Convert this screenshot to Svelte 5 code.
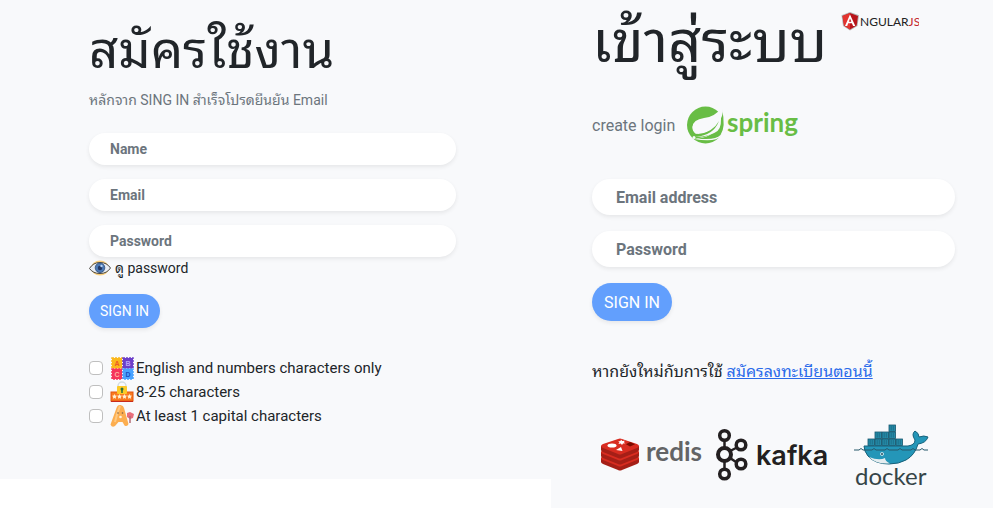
<script>
  let showPassword = $state(false);
  const rules = [
    { id: 'latin', label: 'English and numbers characters only' },
    { id: 'length', label: '8-25 characters' },
    { id: 'capital', label: 'At least 1 capital characters' }
  ];
  const blocks = [
    { x: 1, y: 1, fill: '#fbb81c', ink: '#ee5a24', letter: 'A' },
    { x: 12, y: 1, fill: '#6c3fc9', ink: '#b7a2f5', letter: 'B' },
    { x: 1, y: 12, fill: '#f5365c', ink: '#ffb3a0', letter: 'C' },
    { x: 12, y: 12, fill: '#4aa3ff', ink: '#1b4fc0', letter: 'D' }
  ];
  const boxes = [
    [16, 21], [23, 21], [30, 21], [37, 21], [44, 21],
    [23, 14], [30, 14], [37, 14], [37, 7]
  ];
</script>

<main>
  <section class="register">
    <h1>สมัครใช้งาน</h1>
    <p class="note">หลักจาก SING IN สำเร็จโปรดยืนยัน Email</p>
    <form>
      <input class="field" type="text" placeholder="Name" aria-label="Name" />
      <input class="field" type="email" placeholder="Email" aria-label="Email" />
      <input class="field" type={showPassword ? 'text' : 'password'} placeholder="Password" aria-label="Password" />
      <button class="peek" type="button" onclick={() => (showPassword = !showPassword)}>
        <svg width="22" height="16" viewBox="0 0 22 16" aria-hidden="true">
          <ellipse cx="11" cy="8" rx="9" ry="7.5" fill="#f8cf7d" />
          <path d="M.5 8.5Q4 2.5 11 2.5T21.5 8Q18 13.500 11 13.500T.5 8.500Z" fill="#e9eef4" stroke="#4c4943" stroke-width="1" />
          <circle cx="11" cy="7.800" r="4.800" fill="#4a79b5" stroke="#2f4b75" stroke-width=".8" />
          <circle cx="11" cy="8" r="2.200" fill="#22365f" />
          <circle cx="12.500" cy="6" r="1.200" fill="#b9d4f2" />
        </svg>
        <span>ดู password</span>
      </button>
      <button class="submit" type="submit">SIGN IN</button>
    </form>
    <ul class="rules">
      {#each rules as rule (rule.id)}
        <li>
          <input type="checkbox" id={rule.id} />
          <label for={rule.id}>
            {#if rule.id === 'latin'}
              <svg width="24" height="24" viewBox="0 0 24 24" aria-hidden="true">
                {#each blocks as b}
                  <rect x={b.x + 1} y={b.y + 1} width="10" height="10" fill={b.fill} stroke={b.fill} stroke-width="1.5" stroke-dasharray="2 1" />
                  <text class="tile" x={b.x + 6} y={b.y + 9} fill={b.ink}>{b.letter}</text>
                {/each}
              </svg>
            {:else if rule.id === 'length'}
              <svg width="24" height="24" viewBox="0 0 24 24" aria-hidden="true">
                <path d="M8 7V6a4 4 0 0 1 8 0v1" fill="none" stroke="#d3dce0" stroke-width="1.500" />
                <rect x="1" y="12" width="22" height="9" fill="#f97a20" stroke="#e2560f" />
                <rect x="7" y="6" width="10" height="8" rx="1" fill="#fdca28" />
                <circle cx="12" cy="9" r="1.500" fill="#28703b" />
                <path d="M12 9v4" stroke="#28703b" stroke-width="1.500" />
                {#each [4.5, 9.5, 14.5, 19.5] as x}
                  <path d="M{x} 14l.8 1.600 1.700.2-1.200 1.200.3 1.700-1.600-.8-1.600.8.3-1.700-1.200-1.200 1.700-.2Z" fill="#fff0d2" />
                {/each}
                <path d="M1 21.500h22" stroke="#c92a1c" stroke-width="1" />
              </svg>
            {:else}
              <svg width="24" height="24" viewBox="0 0 24 24" aria-hidden="true">
                <path d="M.5 20.500 6.500 4q1-3.500 4-3T14 4l4.500 16q-1 3-4 1.500L12.500 18h-4L5 22q-3 2-4.500-1.500Z" fill="#fcae50" />
                <path d="M10 2q-3 7-5 16" stroke="#ffc981" stroke-width="2" fill="none" />
                <circle cx="8" cy="9" r=".8" fill="#7d5d42" /><circle cx="12.500" cy="9" r=".8" fill="#7d5d42" />
                <circle cx="10.500" cy="13" r="1.300" fill="#fff3df" />
                <path d="m17 9 3-1 4 2-1 4-3 1-3-2Z" fill="#e96f7b" /><path d="M20 12v7" stroke="#b56b74" stroke-width="1.500" />
              </svg>
            {/if}
            <span>{rule.label}</span>
          </label>
        </li>
      {/each}
    </ul>
  </section>

  <section class="login">
    <header>
      <h1>เข้าสู่ระบบ</h1>
      <svg class="angular" width="78" height="22" viewBox="0 0 78 22" role="img" aria-label="AngularJS">
        <path d="M9 1 18 4.300 16.500 15 9 19.500 2 15 .5 4.300Z" fill="#b3b3b3" />
        <path d="M9 2 17 5l-1.300 9.500-6.700 4-6-4L1.500 5Z" fill="#b8141a" />
        <path d="M9 2v16.500l-6-4L1.500 5Z" fill="#e3342f" />
        <path d="m9 3.500-5 11.500h2.200l1-2.700h3.700l1.200 2.700h2.200Zm0 4 1.300 3.200H7.800Z" fill="#fff" />
        <text x="19" y="15" fill="#222">NGULAR<tspan fill="#c4262e">JS</tspan></text>
      </svg>
    </header>
    <div class="create">
      <span>create login</span>
      <svg width="114" height="40" viewBox="0 0 114 40" role="img" aria-label="spring">
        <circle cx="18.500" cy="20" r="18.500" fill="#68bd45" />
        <path d="M34.500 2.500q7 19-.5 28.500-5 6.500-27 3Q29 31 33 19 26 27 11 29 6 27 5.500 22 6 14.500 17 13 28 12 34.500 2.500Z" fill="#f8f9fb" />
        <path d="M35 4q4 18-1.500 26-5 5.500-23 3.500Q31 31 33 15q3.500-5 2-11Z" fill="#68bd45" />
        <path d="M33.500 6q2 16-3 20-7 5.500-22 6Q24 29 31 17 24 25 9 29 5 26 5.500 22 7 15 17 14 28 13 33.500 6Z" fill="#f8f9fb" />
        <path d="M32 16Q27 26 9 31.500 26 31 32 16Z" fill="#68bd45" />
        <circle cx="7" cy="32.500" r="1.500" fill="#f8f9fb" />
        <text class="spring" x="40" y="27">spring</text>
      </svg>
    </div>
    <form>
      <input class="field" type="email" placeholder="Email address" aria-label="Email address" />
      <input class="field" type="password" placeholder="Password" aria-label="Password" />
      <button class="submit" type="submit">SIGN IN</button>
    </form>
    <p class="join">หากยังใหม่กับการใช้ <a href="#register">สมัครลงทะเบียนตอนนี้</a></p>
    <div class="logos">
      <svg width="106" height="70" viewBox="0 0 106 70" role="img" aria-label="redis">
        {#each [12, 6, 0] as dy}
          <path d="M1 {22 + dy}v4q0 1 2 2l15 6q2 1 4 0l15-6q2-1 2-2v-4Z" fill="#a51f17" />
          <path d="M1 {22 + dy}q0-1 2-2l15-5q2-1 4 0l15 5q2 1 2 2t-2 2l-15 6q-2 1-4 0L3 {24 + dy}q-2-1-2-2Z" fill="#d82c20" />
        {/each}
        <ellipse cx="12" cy="21.500" rx="4.500" ry="2" fill="#fff" />
        <path d="m21 15.500 1.200 1.500 2.600-.3-1 1.500 1.600 1-2.400.2-1 1.500-1.200-1.300-2.500.3 1.200-1.500-1.300-1 2.300-.3Zm-5 10.500 5-3 1.500 4Z" fill="#fff" />
        <path d="m30 18 5 2.300-5 2.300-4-2.300Z" fill="#7a0c00" />
        <text class="redis" x="46" y="37">redis</text>
      </svg>
      <svg class="kafka" width="118" height="70" viewBox="0 0 118 70" role="img" aria-label="kafka">
        <g fill="none" stroke="#231f20">
          <path d="M10.500 15v9M10.500 37v8M16 27l6-3M16 34l6 4" stroke-width="2.500" />
          <circle cx="10.500" cy="11.500" r="4.800" stroke-width="3.500" />
          <circle cx="10.500" cy="30.500" r="6.500" stroke-width="4" />
          <circle cx="10.500" cy="50" r="4.800" stroke-width="3.500" />
          <circle cx="27" cy="21" r="4.800" stroke-width="3.500" />
          <circle cx="27" cy="40" r="4.800" stroke-width="3.500" />
        </g>
        <text class="word" x="42" y="41">kafka</text>
      </svg>
      <svg class="docker" width="78" height="70" viewBox="0 0 78 70" role="img" aria-label="docker">
        <g transform="translate(-2 -6)">
          {#each boxes as [x, y]}
            <rect {x} {y} width="6.500" height="6.500" fill="#258ba8" stroke="#14556c" stroke-width=".8" />
            <path d="M{x + 2.2} {y + 1}v4.500M{x + 4.3} {y + 1}v4.500" stroke="#14556c" stroke-width=".5" />
          {/each}
        </g>
        <path d="M10 22h44q7-1 7-6-4-6 0-9 4 2 4 6 5-2 9 0-2 6-10 7-3 11-12 16-7 4-17 4-14 0-21-8-4-5-4-10Z" fill="#2496b8" stroke="#17617a" />
        <path d="M15 33q10 4 16 1 0 3 5 5.500-14 1-21-6.500Z" fill="#e5edf0" />
        <circle cx="28" cy="30" r="1.800" fill="#fff" /><circle cx="28" cy="30" r="1" fill="#17485b" />
        <path d="M0 26h5l2-1.500 2 1.500h9l2-1.500 2 1.500h9l2-1.500 2 1.500h9l2-1.500 2 1.500h9l2-1.500 2 1.500h5l2-1.500 2 1.500h4" fill="none" stroke="#26586a" />
        <text class="dock" x="1" y="61">docker</text>
      </svg>
    </div>
  </section>
</main>

<style>
  :global(body) { margin: 0; background: #fff; }
  main {
    display: grid;
    grid-template-columns: 551fr 442fr;
    align-items: start;
    font-family: Roboto, "Noto Sans Thai Looped", "Noto Sans Thai", "Noto Sans", sans-serif;
    color: #212529;
  }
  * { box-sizing: border-box; }
  section { background: #f8f9fb; }
  h1, p, ul { margin: 0; font-weight: 400; }
  form { display: flex; flex-direction: column; align-items: flex-start; }
  input, button { font-family: inherit; }
  .register { padding: 17px 95px 51px 89px; font-size: 14px; }
  .login { padding: 8px 38px 14px 41px; font-size: 16px; }
  h1 { line-height: 68px; white-space: nowrap; }
  .register h1 { font-size: 51px; }
  .login h1 { font-size: 58px; }
  .note { color: #6c757d; font-size: 14px; line-height: 22px; padding-top: 4px; white-space: nowrap; }
  .field {
    width: 100%;
    border: 0;
    border-radius: 24px;
    background: #fff;
    box-shadow: 0 2px 4px rgba(0, 0, 0, .075);
    outline: 0;
    color: #495057;
    font-weight: 700;
  }
  .field::placeholder { color: #6c757d; opacity: 1; }
  .register form { padding-top: 22px; }
  .register .field { height: 32px; padding: 0 21px; font-size: 14px; margin-bottom: 14px; }
  .register .field:nth-of-type(3) { margin-bottom: 0; }
  .peek {
    display: flex;
    align-items: center;
    gap: 4px;
    height: 22px;
    padding: 0;
    border: 0;
    background: none;
    color: #212529;
    font-size: 14px;
    line-height: 20px;
  }
  .submit {
    border: 0;
    border-radius: 24px;
    background: #629ffd;
    color: #fff;
    box-shadow: 0 2px 4px rgba(0, 0, 0, .075);
  }
  .register .submit { width: 71px; height: 34px; padding: 0; margin-top: 15px; font-size: 14px; }
  .rules { list-style: none; padding: 28px 0 0; }
  .rules li { display: flex; align-items: center; gap: 7px; height: 24px; font-size: 15px; }
  .rules label { display: flex; align-items: center; gap: 2px; white-space: nowrap; }
  .rules input {
    appearance: none;
    width: 14px;
    height: 14px;
    margin: 0;
    border: 1px solid #bfbfbf;
    border-radius: 4px;
    background: #fff;
  }
  .rules input:checked { background: #629ffd; }
  .tile { font: 700 7px "Liberation Sans", sans-serif; text-anchor: middle; }
  header { display: flex; align-items: flex-start; justify-content: space-between; }
  .angular { margin: 3px 36px 0 0; font: 12px Lato, sans-serif; flex: none; }
  .create { display: flex; align-items: center; gap: 12px; padding-top: 29px; color: #6c757d; }
  .spring { font: 700 26px Lato, sans-serif; fill: #68bd45; }
  .login form { padding-top: 34px; }
  .login .field { height: 36px; padding: 0 24px; font-size: 16px; margin-bottom: 16px; }
  .login .submit { width: 80px; height: 38px; padding: 0; font-size: 16px; }
  .join { padding-top: 39px; line-height: 24px; white-space: nowrap; }
  a { color: #2b6bea; }
  .logos { display: flex; align-items: flex-start; padding: 40px 0 0 8px; }
  .logos svg { flex: none; }
  .kafka { margin-left: 8px; }
  .docker { margin-left: 22px; }
  .redis { font: 700 26px Lato, sans-serif; fill: #636466; }
  .word { font: 600 27px Inter, sans-serif; fill: #231f20; }
  .dock { font: 400 24px Lato, sans-serif; fill: #364548; }
</style>
